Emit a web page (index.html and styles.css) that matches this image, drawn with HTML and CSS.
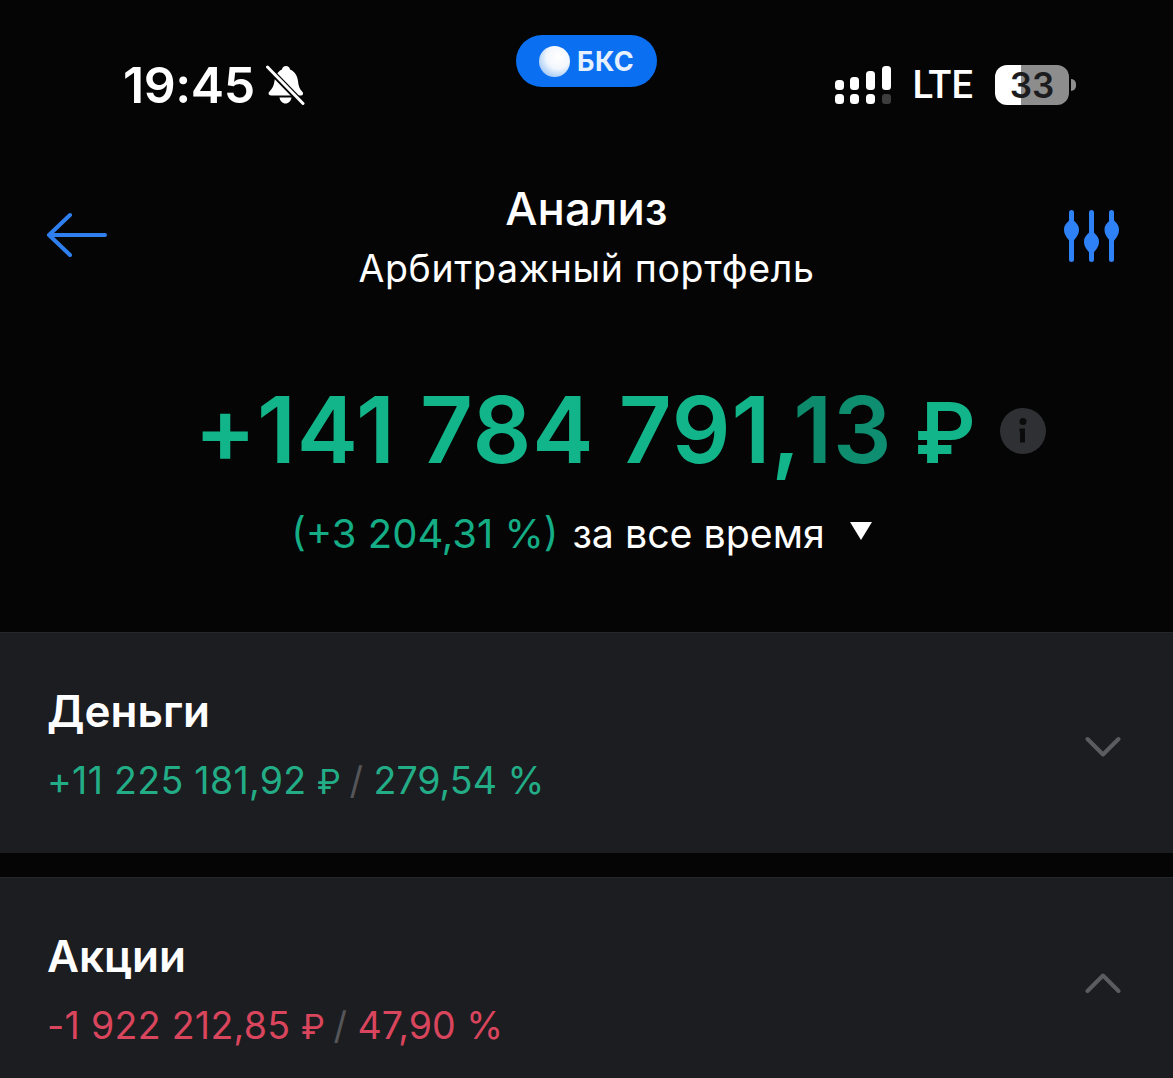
FILE: index.html
```html
<!DOCTYPE html>
<html lang="ru">
<head>
<meta charset="utf-8">
<title>Анализ</title>
<link rel="stylesheet" href="styles.css">
</head>
<body>
<div class="screen">
  <div class="status">
    <div class="status-left">
      <span class="time">19:45</span>
      <svg class="bell" viewBox="0 0 40 40" width="40" height="40"><path fill="#fff" d="M21 1c2.200 0 3.800 1.500 4 3.500C30 6.500 32.500 11 33 16c.5 5 1.500 8 4.500 11 1.200 1.300.5 3.500-1.500 3.500H6c-2.200 0-3.200-2.200-1.700-3.700C7.500 23.500 9 20 9.500 16 10 11 12.500 6.500 17 4.500 17.200 2.500 18.800 1 21 1z"/><path fill="#fff" d="M14.500 32.500h12c-.5 3.500-3 6-6 6s-5.500-2.500-6-6z"/><path stroke="#050506" stroke-width="6" d="M2 2l36 37"/><path stroke="#fff" stroke-width="3" stroke-linecap="round" d="M2.500 2l35.500 36.500"/></svg>
    </div>
    <div class="pill"><span class="ball"></span><span class="pill-text">БКС</span></div>
    <div class="status-right">
      <svg class="signal" viewBox="0 0 58 38" width="58" height="38"><g fill="#fff"><rect x="0" y="14" width="9" height="10" rx="3.500"/><rect x="15" y="11" width="9" height="13" rx="3.500"/><rect x="31" y="5" width="9" height="19" rx="3.500"/><rect x="47" y="0" width="9" height="24" rx="3.500"/><rect x="0" y="28" width="9" height="10" rx="3.500"/><rect x="15" y="28" width="9" height="10" rx="3.500"/><rect x="31" y="28" width="9" height="10" rx="3.500"/></g><rect x="47" y="28" width="9" height="10" rx="3" fill="#3d3d3d"/></svg>
      <span class="lte">LTE</span>
      <div class="battery"><span class="battery-num">33</span></div>
      <span class="battery-tip"></span>
    </div>
  </div>

  <header class="nav">
    <svg class="back" viewBox="0 0 62 48" width="62" height="48"><path d="M3 24h56M24 4L3 24l21 20" fill="none" stroke="#2f7fee" stroke-width="4" stroke-linecap="round" stroke-linejoin="round"/></svg>
    <div class="nav-title">
      <div class="title">Анализ</div>
      <div class="subtitle">Арбитражный портфель</div>
    </div>
    <svg class="filters" viewBox="0 0 58 54" width="58" height="54"><g fill="#2f82f5"><rect x="7" y="0" width="5" height="52" rx="2.500"/><rect x="27" y="0" width="5" height="52" rx="2.500"/><rect x="47" y="0" width="5" height="52" rx="2.500"/><path d="M9.500 6C11 12 17 13 17 19.500S13 28 9.500 34C6 28 2 26 2 19.500S8 12 9.500 6z"/><path d="M29.500 18C31 24 37 25 37 31.500S33 40 29.500 46C26 40 22 38 22 31.500S28 24 29.500 18z"/><path d="M50 6C51.500 12 57 13 57 19.500S53.500 28 50 34C46.500 28 42.500 26 42.500 19.500S48.500 12 50 6z"/></g></svg>
  </header>

  <section class="summary">
    <div class="total-row">
      <span class="total">+141 784 791,<span class="total-fade">13</span> <span class="total-rub">₽</span></span>
      <span class="info"><svg viewBox="0 0 46 46" width="46" height="46"><circle cx="23" cy="23" r="23" fill="#2f3033"/><circle cx="23" cy="13.500" r="3.500" fill="#0b0b0c"/><path d="M19.500 20.500h5.500v14h-5v-11h-.5z" fill="#0b0b0c"/></svg></span>
    </div>
    <div class="period">
      <span class="period-pct">(+3 204,31 %)</span>
      <span class="period-label">за все время</span>
      <span class="caret"></span>
    </div>
  </section>

  <section class="card card-money">
    <div>
      <div class="card-title">Деньги</div>
      <div class="card-value up"><span class="amount">+11 225 181,92</span> <span class="rub">₽</span> <span class="slash">/</span> 279,54 %</div>
    </div>
    <svg class="chev" viewBox="0 0 36 22" width="36" height="22"><path d="M2.500 3L18 18.500 33.500 3" fill="none" stroke="#5b5c60" stroke-width="4" stroke-linecap="round" stroke-linejoin="round"/></svg>
  </section>

  <section class="card card-stocks">
    <div>
      <div class="card-title">Акции</div>
      <div class="card-value down"><span class="amount">-1 922 212,85</span> <span class="rub">₽</span> <span class="slash">/</span> 47,90 %</div>
    </div>
    <svg class="chev chev-up" viewBox="0 0 36 22" width="36" height="22"><path d="M2.500 19L18 3.500 33.500 19" fill="none" stroke="#5b5c60" stroke-width="4" stroke-linecap="round" stroke-linejoin="round"/></svg>
  </section>
</div>
</body>
</html>
```

FILE: styles.css
```css
* { box-sizing: border-box; }
html, body { margin: 0; padding: 0; background: #050506; }
body { font-family: Inter, "Liberation Sans", sans-serif; color: #fff; }
.screen { width: 1173px; height: 1078px; overflow: hidden; display: flex; flex-direction: column; }

.status { height: 130px; display: grid; grid-template-columns: 1fr auto 1fr; padding: 35px 97px 0 97px; }
.status-left { display: flex; align-items: center; gap: 10px; height: 100px; padding-left: 26px; }
.time { font-size: 50px; font-weight: 600; line-height: 1; letter-spacing: -0.4px; }
.bell { flex: none; }
.pill { height: 52px; width: 141px; border-radius: 26px; background: #0a6ff0; display: flex; align-items: center; gap: 7px; padding-left: 23px; }
.ball { width: 31px; height: 31px; border-radius: 50%; background: radial-gradient(circle at 62% 35%, #fff 0, #f2f7fd 42%, #a4c9f6 78%, #7fb2f2 100%); }
.pill-text { font-size: 27px; font-weight: 700; color: #e6f1ff; letter-spacing: 0.5px; }
.status-right { display: flex; align-items: center; justify-content: flex-end; height: 100px; }
.signal { flex: none; }
.lte { font-size: 38px; font-weight: 500; margin-left: 19px; font-family: "Roboto", Inter, sans-serif; }
.battery { width: 74px; height: 40px; border-radius: 12px; margin-left: 22px; background: linear-gradient(90deg, #fff 0 35%, #8d8d8d 35% 100%); display: flex; align-items: center; justify-content: center; }
.battery-num { font-size: 35px; font-weight: 600; color: #1c1c1e; line-height: 1; }
.battery-tip { width: 5px; height: 12px; background: #8d8d8d; border-radius: 0 6px 6px 0; margin-left: 2px; }

.nav { height: 172px; display: flex; justify-content: space-between; padding: 0 53px 0 45px; position: relative; }
.back { margin-top: 81px; margin-left: 1px; }
.filters { margin-top: 80px; }
.nav-title { position: absolute; left: 0; right: 0; top: 54px; text-align: center; }
.title { font-size: 45.500px; font-weight: 500; line-height: 50px; }
.subtitle { font-size: 37.500px; font-weight: 400; line-height: 50px; margin-top: 10px; letter-spacing: 0.65px; }

.summary { height: 330px; display: flex; flex-direction: column; align-items: center; }
.total-row { display: flex; align-items: center; margin-top: 74px; padding-left: 67px; height: 110px; }
.total { font-size: 92px; font-weight: 600; color: #12b589; line-height: 110px; letter-spacing: 0.900px; white-space: nowrap; }
.total-fade { background: linear-gradient(90deg, #0c8a6a, #0f8f72); -webkit-background-clip: text; background-clip: text; color: transparent; }
.total-rub { font-size: 84px; margin-left: -2px; letter-spacing: 0; }
.info { margin-left: 24px; display: flex; }
.period { display: flex; align-items: center; margin-top: 23px; padding-right: 10px; }
.period-pct { font-size: 40px; color: #14ad85; font-weight: 400; }
.period-label { font-size: 39.300px; margin-left: 14px; }
.caret { width: 0; height: 0; margin-left: 25px; margin-top: -6px; border-left: 11px solid transparent; border-right: 11px solid transparent; border-top: 18px solid #fff; }

.card { background: #1c1d21; display: flex; justify-content: space-between; padding: 0 52px 0 47px; }
.card-money { height: 221px; border-top: 1px solid #26272b; }
.card-stocks { height: 201px; margin-top: 24px; border-top: 1px solid #26272b; }
.card-title { font-size: 44px; font-weight: 600; line-height: 52px; margin-top: 52px; }
.card-value { font-size: 37.500px; line-height: 48px; margin-top: 20px; white-space: nowrap; }
.amount { letter-spacing: 0.300px; }
.rub { font-size: 34px; }
.up { color: #22ad87; }
.down { color: #d9455c; }
.slash { color: #55565a; margin-left: -2px; }
.chev { margin-top: 103px; }
.chev-up { margin-top: 94px; }
```
